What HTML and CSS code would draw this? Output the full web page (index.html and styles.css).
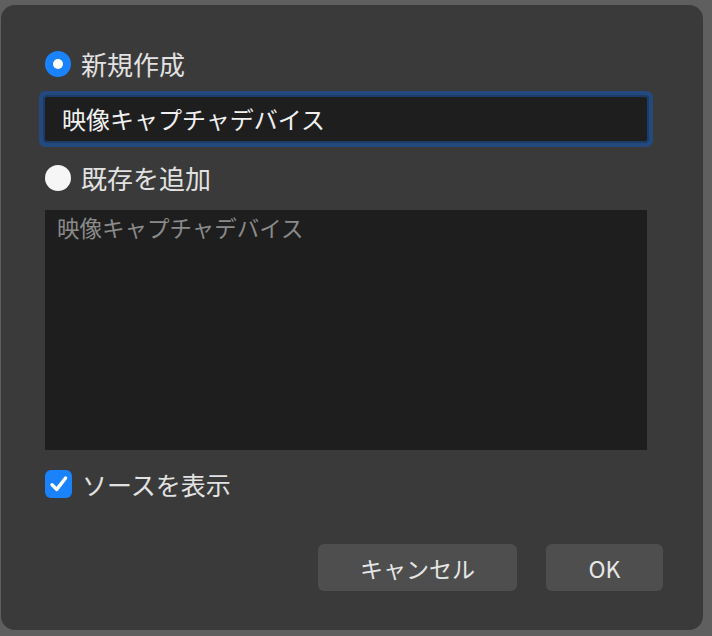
FILE: index.html
```html
<!DOCTYPE html>
<html lang="ja">
<head>
<meta charset="utf-8">
<link rel="stylesheet" href="styles.css">
</head>
<body>
<div class="dialog">
  <div class="option first">
    <span class="radio checked"><span class="dot"></span></span>
    <span class="label">新規作成</span>
  </div>
  <div class="field">映像キャプチャデバイス</div>
  <div class="option second">
    <span class="radio"></span>
    <span class="label">既存を追加</span>
  </div>
  <div class="list">
    <div class="list-item">映像キャプチャデバイス</div>
  </div>
  <div class="option third">
    <span class="checkbox">
      <svg width="22" height="22" viewBox="0 0 22 22"><path d="M4 11.8 L8.8 16.4 L17.6 5" fill="none" stroke="#fff" stroke-width="3.4" stroke-linecap="round" stroke-linejoin="round"/></svg>
    </span>
    <span class="label short">ソースを表示</span>
  </div>
  <div class="buttons">
    <button class="btn cancel">キャンセル</button>
    <button class="btn ok">OK</button>
  </div>
</div>
</body>
</html>
```
FILE: styles.css
```css
html, body {
  margin: 0;
  padding: 0;
}
body {
  width: 712px;
  height: 636px;
  overflow: hidden;
  background: #5f5f5f;
  font-family: "Noto Sans CJK JP", "Noto Sans", sans-serif;
}
.dialog {
  box-sizing: border-box;
  margin: 5px 0 0 1px;
  width: 702px;
  height: 625px;
  border-radius: 14px;
  background: #3a3a3a;
  padding: 43px 40px 0 43px;
  display: flex;
  flex-direction: column;
  align-items: flex-start;
}
.option {
  height: 32px;
  display: flex;
  align-items: center;
  gap: 10px;
}
.option.second { margin-top: 21px; }
.option.third { margin-top: 18px; }
.label {
  color: #e2e2e2;
  font-size: 26px;
  line-height: 32px;
}
.label.short {
  font-size: 25px;
}
.radio {
  margin-left: 1px;
  width: 26px;
  height: 26px;
  border-radius: 50%;
  background: #f6f6f6;
  display: flex;
  align-items: center;
  justify-content: center;
}
.radio.checked {
  background: #1a82fb;
}
.dot {
  width: 10px;
  height: 10px;
  border-radius: 50%;
  background: #fff;
}
.field {
  box-sizing: border-box;
  margin: 17px 0 0 1px;
  width: 602px;
  height: 44px;
  background: #1e1e1e;
  border-radius: 2px;
  box-shadow: 0 0 0 2px #1c3c68, 0 0 0 6px #23497f;
  color: #f0f0f0;
  font-size: 24px;
  line-height: 44px;
  padding-left: 17px;
}
.list {
  box-sizing: border-box;
  margin: 16px 0 0 1px;
  width: 602px;
  height: 240px;
  background: #1e1e1e;
  padding: 3px 12px;
}
.list-item {
  color: #8a8a8a;
  font-size: 22.5px;
  line-height: 28px;
}
.checkbox {
  margin-left: 1px;
  width: 27px;
  height: 28px;
  border-radius: 6px;
  background: #1a82fb;
  display: flex;
  align-items: center;
  justify-content: center;
}
.buttons {
  margin-top: 44px;
  align-self: flex-end;
  display: flex;
  gap: 29px;
}
.btn {
  height: 47px;
  border: none;
  border-radius: 6px;
  background: #4e4e4e;
  color: #e6e6e6;
  font-family: "Noto Sans CJK JP", "Noto Sans", sans-serif;
  font-size: 23px;
  padding: 0;
}
.btn.cancel { width: 199px; }
.btn.ok { width: 117px; }
```
